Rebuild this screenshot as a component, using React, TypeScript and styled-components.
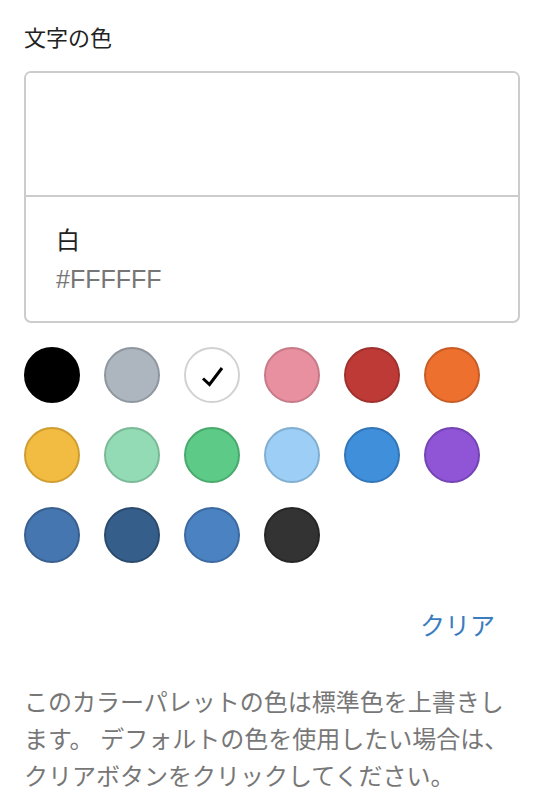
import React from "react";
import styled, { createGlobalStyle } from "styled-components";

const Global = createGlobalStyle`
  html, body { margin: 0; padding: 0; background: #fff; }
  body { font-family: "Liberation Sans", "Noto Sans CJK JP", sans-serif; }
  * { box-sizing: border-box; }
`;

const Page = styled.div`
  width: 548px;
  padding: 24px 28px 0 24px;
  display: flex;
  flex-direction: column;
`;

const Title = styled.div`
  font-size: 22px;
  line-height: 30px;
  color: #222;
  margin-bottom: 17px;
`;

const Preview = styled.div`
  border: 2px solid #cccccc;
  border-radius: 7px;
  display: flex;
  flex-direction: column;
  overflow: hidden;
`;

const PreviewSwatch = styled.div<{ $color: string }>`
  height: 124px;
  background: ${(p) => p.$color};
  border-bottom: 2px solid #cccccc;
`;

const PreviewInfo = styled.div`
  height: 124px;
  padding: 28px 30px 0;
  display: flex;
  flex-direction: column;
  gap: 6px;
`;

const ColorName = styled.div`
  font-size: 24px;
  line-height: 32px;
  color: #222;
`;

const ColorHex = styled.div`
  font-size: 25px;
  line-height: 32px;
  color: #767676;
`;

const Palette = styled.div`
  margin-top: 24px;
  display: grid;
  grid-template-columns: repeat(6, 56px);
  gap: 24px;
`;

const Swatch = styled.button<{ $color: string; $edge: string }>`
  width: 56px;
  height: 56px;
  border-radius: 50%;
  padding: 0;
  border: 2px solid ${(p) => p.$edge};
  background: ${(p) => p.$color};
  display: flex;
  align-items: center;
  justify-content: center;
  cursor: pointer;
`;

const Actions = styled.div`
  margin-top: 47px;
  display: flex;
  justify-content: flex-end;
`;

const ClearButton = styled.button`
  background: none;
  border: none;
  padding: 0 25px 0 0;
  font-family: inherit;
  font-size: 25px;
  line-height: 32px;
  color: #3a7cc0;
  cursor: pointer;
`;

const Help = styled.p`
  margin: 42px 0 0;
  font-size: 24px;
  line-height: 37px;
  color: #777777;
`;

const swatches = [
  { c: "#000000", e: "#000000" },
  { c: "#adb5bf", e: "#8e969f" },
  { c: "#ffffff", e: "#d2d2d2", sel: true },
  { c: "#e8909f", e: "#c67a88" },
  { c: "#be3a37", e: "#a0302d" },
  { c: "#ed702f", e: "#c95c25" },
  { c: "#f2bc43", e: "#cf9d2f" },
  { c: "#93dbb5", e: "#79b996" },
  { c: "#5dcb87", e: "#48a96c" },
  { c: "#9dcef6", e: "#80aed1" },
  { c: "#408fdb", e: "#3275b8" },
  { c: "#8f55d6", e: "#7443b4" },
  { c: "#4576b0", e: "#385f8e" },
  { c: "#365e8a", e: "#2b4b6e" },
  { c: "#4a82c2", e: "#3b69a0" },
  { c: "#333333", e: "#262626" },
];

const Check = () => (
  <svg width="28" height="28" viewBox="0 0 28 28" fill="none">
    <path
      d="M5 17.5 L11.5 23.5 L24 7"
      stroke="#000"
      strokeWidth="3"
      strokeLinecap="butt"
      strokeLinejoin="miter"
    />
  </svg>
);

export default function App() {
  return (
    <>
      <Global />
      <Page>
        <Title>文字の色</Title>
        <Preview>
          <PreviewSwatch $color="#ffffff" />
          <PreviewInfo>
            <ColorName>白</ColorName>
            <ColorHex>#FFFFFF</ColorHex>
          </PreviewInfo>
        </Preview>
        <Palette>
          {swatches.map((s, i) => (
            <Swatch key={i} $color={s.c} $edge={s.e} aria-label={s.c}>
              {s.sel && <Check />}
            </Swatch>
          ))}
        </Palette>
        <Actions>
          <ClearButton>クリア</ClearButton>
        </Actions>
        <Help>
          このカラーパレットの色は標準色を上書きします。 デフォルトの色を使用したい場合は、クリアボタンをクリックしてください。
        </Help>
      </Page>
    </>
  );
}
